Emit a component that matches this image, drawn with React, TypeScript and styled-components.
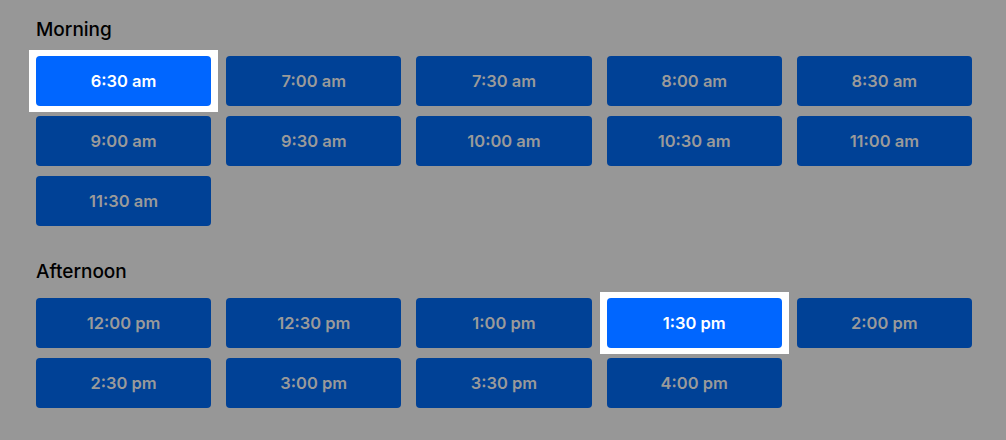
import styled, { createGlobalStyle } from "styled-components";

const GlobalStyle = createGlobalStyle`
  html, body {
    margin: 0;
    padding: 0;
    background: #979797;
    font-family: Inter, "Noto Sans", sans-serif;
  }
`;

const morning = [
  "6:30 am", "7:00 am", "7:30 am", "8:00 am", "8:30 am",
  "9:00 am", "9:30 am", "10:00 am", "10:30 am", "11:00 am",
  "11:30 am",
];

const afternoon = [
  "12:00 pm", "12:30 pm", "1:00 pm", "1:30 pm", "2:00 pm",
  "2:30 pm", "3:00 pm", "3:30 pm", "4:00 pm",
];

const selected = ["6:30 am", "1:30 pm"];

function Slots({ title, times }: { title: string; times: string[] }) {
  return (
    <Section>
      <Heading>{title}</Heading>
      <Grid>
        {times.map((t) => (
          <Slot key={t} active={selected.includes(t)}>
            {t}
          </Slot>
        ))}
      </Grid>
    </Section>
  );
}

export default function App() {
  return (
    <>
      <GlobalStyle />
      <Page>
        <Slots title="Morning" times={morning} />
        <Slots title="Afternoon" times={afternoon} />
      </Page>
    </>
  );
}

const Page = styled.div`
  display: flex;
  flex-direction: column;
  gap: 32px;
  width: 936px;
  padding: 16px 34px 0 36px;
`;

const Section = styled.section`
  display: flex;
  flex-direction: column;
  gap: 12px;
`;

const Heading = styled.h3`
  margin: 0;
  font-size: 19px;
  line-height: 28px;
  font-weight: 500;
  color: #000;
`;

const Grid = styled.div`
  display: grid;
  grid-template-columns: repeat(5, 1fr);
  column-gap: 15px;
  row-gap: 10px;
  isolation: isolate;
`;

interface SlotProps {
  active: boolean;
}

const Slot = styled.button.withConfig({
  shouldForwardProp: (p) => p !== "active",
})<SlotProps>`
  position: relative;
  height: 50px;
  border: none;
  border-radius: 4px;
  font-family: Inter, "Noto Sans", sans-serif;
  font-size: 16.5px;
  font-weight: 600;
  cursor: pointer;
  background: ${(p) => (p.active ? "#0066ff" : "#004196")};
  color: ${(p) => (p.active ? "#ffffff" : "#9a9a9a")};

  /* white focus ring with square corners */
  &::before {
    content: "";
    display: ${(p) => (p.active ? "block" : "none")};
    position: absolute;
    inset: -6px -7px -6px -7px;
    background: #ffffff;
    z-index: -1;
  }
`;
